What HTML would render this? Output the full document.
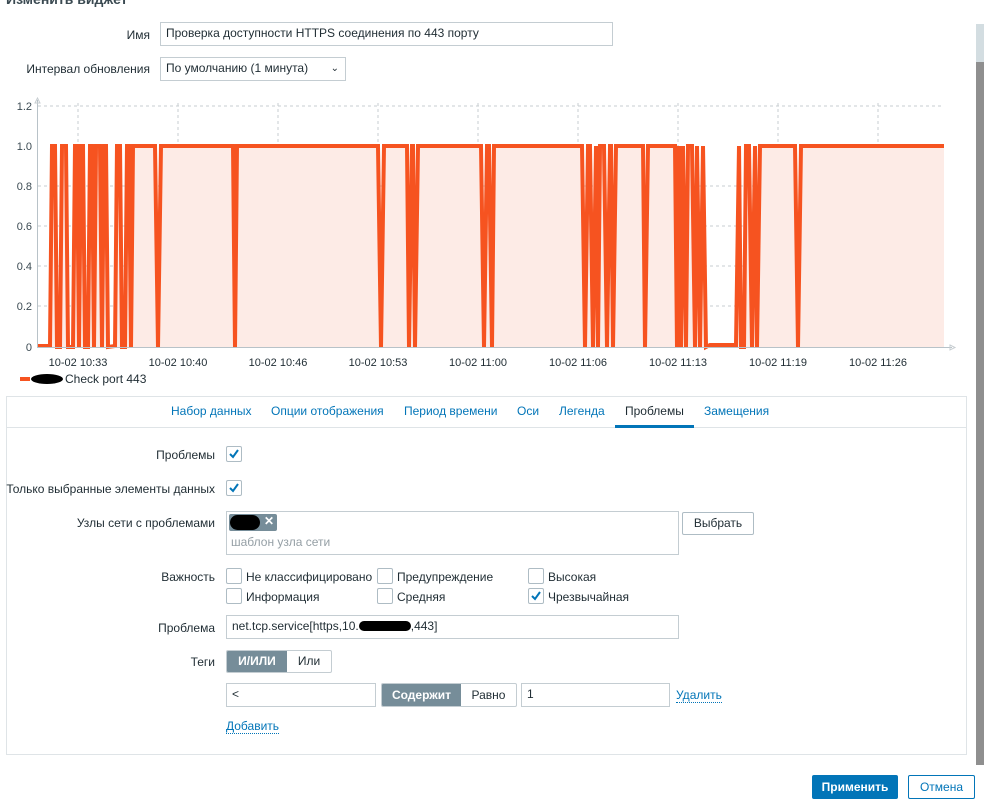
<!DOCTYPE html>
<html><head><meta charset="utf-8"><style>
*{box-sizing:border-box}
body{margin:0;width:984px;height:807px;background:#fff;font-family:"Liberation Sans",Arial,sans-serif;font-size:12px;color:#1f2c33;position:relative;overflow:hidden}
.a{position:absolute}
.lbl{position:absolute;text-align:right;white-space:nowrap}
.inp{position:absolute;border:1px solid #c4cdd2;background:#fff;padding:0 5px;line-height:21px;white-space:nowrap}
.cb{position:absolute;width:16px;height:16px;border:1px solid #aebcc4;border-radius:2px;background:#fff}
.tab{position:absolute;top:404px;color:#0275b8;white-space:nowrap}
.link{color:#0275b8;border-bottom:1px dotted #0275b8}
</style></head><body>
<div class="a" style="left:6px;top:-9px;font-size:14px;font-weight:bold;color:#3b4a52">Изменить виджет</div>

<div class="lbl" style="right:834px;top:28px">Имя</div>
<div class="inp" style="left:160px;top:22px;width:453px;height:24px">Проверка доступности HTTPS соединения по 443 порту</div>
<div class="lbl" style="right:834px;top:62px">Интервал обновления</div>
<div class="inp" style="left:160px;top:57px;width:186px;height:24px">По умолчанию (1 минута)<span style="position:absolute;right:6px;top:0;font-size:10px">&#8964;</span></div>

<svg class="a" style="left:0;top:95px" width="970" height="300" viewBox="0 95 970 300">
<g stroke="#c7cdd1" stroke-dasharray="3,3" stroke-width="1">
<line x1="38" y1="106" x2="944" y2="106"/><line x1="38" y1="186" x2="944" y2="186"/><line x1="38" y1="226" x2="944" y2="226"/><line x1="38" y1="266" x2="944" y2="266"/><line x1="38" y1="306" x2="944" y2="306"/>
<line x1="78" y1="103" x2="78" y2="347"/><line x1="178" y1="103" x2="178" y2="347"/><line x1="278" y1="103" x2="278" y2="347"/><line x1="378" y1="103" x2="378" y2="347"/><line x1="478" y1="103" x2="478" y2="347"/><line x1="578" y1="103" x2="578" y2="347"/><line x1="678" y1="103" x2="678" y2="347"/><line x1="778" y1="103" x2="778" y2="347"/><line x1="878" y1="103" x2="878" y2="347"/>
</g>
<polygon fill="#fdebe6" points="38,347 50,347 52,146 55,146 57,347 60,347 62,146 66,146 68,347 73,347 75,146 77,146 79,347 81,146 83,146 85,347 88,347 90,146 92,146 94,347 96,146 100,146 102,347 104,146 106,146 108,347 115,347 117,146 120,146 122,347 125,347 127,146 129,146 131,347 133,146 155,146 158,347 161,146 233,146 235,347 237,146 378,146 381,347 384,146 407,146 409,347 412,146 413,146 415,347 418,146 481,146 484,347 487,146 489,146 492,347 494,146 582,146 585,347 588,146 590,146 593,347 596,146 598,347 600,146 604,146 607,347 610,146 611,146 613,347 616,146 643,146 645,347 648,146 675,146 677,347 679,146 681,347 683,146 686,347 688,146 692,146 695,347 697,146 700,347 703,146 706,347 710,345 736,345 739,146 741,347 744,347 746,146 749,146 752,347 755,146 757,347 760,146 795,146 798,347 801,146 944,146 944,347"/>
<polyline fill="none" stroke="#f65320" stroke-width="4" stroke-linejoin="miter" points="38,346 50,346 52,146 55,146 57,347 60,347 62,146 66,146 68,347 73,347 75,146 77,146 79,347 81,146 83,146 85,347 88,347 90,146 92,146 94,347 96,146 100,146 102,347 104,146 106,146 108,347 115,346 117,146 120,146 122,347 125,347 127,146 129,146 131,347 133,146 155,146 158,347 161,146 233,146 235,347 237,146 378,146 381,347 384,146 407,146 409,347 412,146 413,146 415,347 418,146 481,146 484,347 487,146 489,146 492,347 494,146 582,146 585,347 588,146 590,146 593,347 596,146 598,347 600,146 604,146 607,347 610,146 611,146 613,347 616,146 643,146 645,347 648,146 675,146 677,347 679,146 681,347 683,146 686,347 688,146 692,146 695,347 697,146 700,347 703,146 706,347 710,345 736,345 739,146 741,347 744,347 746,146 749,146 752,347 755,146 757,347 760,146 795,146 798,347 801,146 944,146"/>
<line x1="37.5" y1="100" x2="37.5" y2="348" stroke="#b8c2c8"/>
<line x1="37" y1="347.5" x2="952" y2="347.5" stroke="#b8c2c8"/>
<path d="M35,103 L37.5,98 L40,103Z M950,345 L955,347.5 L950,350Z" fill="none" stroke="#c7cdd1"/>
<g font-family="Liberation Sans,sans-serif" font-size="11" fill="#3b4a52" text-anchor="end">
<text x="32" y="110">1.2</text><text x="32" y="150">1.0</text><text x="32" y="190">0.8</text><text x="32" y="230">0.6</text><text x="32" y="270">0.4</text><text x="32" y="310">0.2</text><text x="32" y="351">0</text>
</g>
<g font-family="Liberation Sans,sans-serif" font-size="11" fill="#1f2c33" text-anchor="middle">
<text x="78" y="366">10-02 10:33</text><text x="178" y="366">10-02 10:40</text><text x="278" y="366">10-02 10:46</text><text x="378" y="366">10-02 10:53</text><text x="478" y="366">10-02 11:00</text><text x="578" y="366">10-02 11:06</text><text x="678" y="366">10-02 11:13</text><text x="778" y="366">10-02 11:19</text><text x="878" y="366">10-02 11:26</text>
</g>
<rect x="20" y="377" width="10" height="4" fill="#f65320"/>
<ellipse cx="47" cy="379" rx="16" ry="5" fill="#000"/>
<text x="65" y="383" font-family="Liberation Sans,sans-serif" font-size="12" fill="#1f2c33">Check port 443</text>
</svg>

<div class="a" style="left:6px;top:396px;width:961px;height:359px;border:1px solid #dfe4e7"></div>
<div class="a" style="left:7px;top:427px;width:959px;height:1px;background:#dfe4e7"></div>
<div class="tab" style="left:171px">Набор данных</div>
<div class="tab" style="left:271px">Опции отображения</div>
<div class="tab" style="left:404px">Период времени</div>
<div class="tab" style="left:517px">Оси</div>
<div class="tab" style="left:559px">Легенда</div>
<div class="tab" style="left:625px;color:#1f2c33">Проблемы</div>
<div class="a" style="left:615px;top:425px;width:79px;height:3px;background:#0275b8"></div>
<div class="tab" style="left:704px">Замещения</div>

<div class="lbl" style="right:769px;top:448px">Проблемы</div>
<div class="cb" style="left:226px;top:446px"><svg width="14" height="14" class="a" style="left:0;top:0"><path d="M3,7 L6,10 L11,3" fill="none" stroke="#0275b8" stroke-width="2"/></svg></div>
<div class="lbl" style="right:769px;top:482px">Только выбранные элементы данных</div>
<div class="cb" style="left:226px;top:480px"><svg width="14" height="14" class="a" style="left:0;top:0"><path d="M3,7 L6,10 L11,3" fill="none" stroke="#0275b8" stroke-width="2"/></svg></div>

<div class="lbl" style="right:769px;top:516px">Узлы сети с проблемами</div>
<div class="a" style="left:226px;top:511px;width:453px;height:44px;border:1px solid #c4cdd2"></div>
<div class="a" style="left:229px;top:514px;width:48px;height:17px;background:#768d99;border-radius:2px"></div>
<div class="a" style="left:230px;top:515px;width:30px;height:15px;background:#000;border-radius:8px"></div>
<div class="a" style="left:264px;top:514px;color:#fff;font-weight:bold;font-size:12px">✕</div>
<div class="a" style="left:231px;top:535px;color:#959fa5">шаблон узла сети</div>
<div class="a" style="left:682px;top:512px;width:72px;height:23px;border:1px solid #aebcc4;border-radius:2px;text-align:center;line-height:21px">Выбрать</div>

<div class="lbl" style="right:769px;top:570px">Важность</div>
<div class="cb" style="left:226px;top:568px"></div><div class="a" style="left:246px;top:570px">Не классифицировано</div>
<div class="cb" style="left:377px;top:568px"></div><div class="a" style="left:397px;top:570px">Предупреждение</div>
<div class="cb" style="left:528px;top:568px"></div><div class="a" style="left:548px;top:570px">Высокая</div>
<div class="cb" style="left:226px;top:588px"></div><div class="a" style="left:246px;top:590px">Информация</div>
<div class="cb" style="left:377px;top:588px"></div><div class="a" style="left:397px;top:590px">Средняя</div>
<div class="cb" style="left:528px;top:588px"><svg width="14" height="14" class="a" style="left:0;top:0"><path d="M3,7 L6,10 L11,3" fill="none" stroke="#0275b8" stroke-width="2"/></svg></div><div class="a" style="left:548px;top:590px">Чрезвычайная</div>

<div class="lbl" style="right:769px;top:621px">Проблема</div>
<div class="inp" style="left:226px;top:615px;width:453px;height:24px">net.tcp.service[https,10.<span style="display:inline-block;width:52px;height:10px;background:#000;border-radius:5px;vertical-align:-1px"></span>,443]</div>

<div class="lbl" style="right:769px;top:655px">Теги</div>
<div class="a" style="left:226px;top:650px;width:106px;height:23px;border:1px solid #c4cdd2;border-radius:2px;overflow:hidden">
<div class="a" style="left:0;top:0;width:60px;height:21px;background:#768d99;color:#fff;font-weight:bold;text-align:center;line-height:21px">И/ИЛИ</div>
<div class="a" style="left:60px;top:0;width:44px;height:21px;text-align:center;line-height:21px">Или</div></div>

<div class="inp" style="left:226px;top:683px;width:150px;height:24px">&lt;</div>
<div class="a" style="left:381px;top:683px;width:136px;height:24px;border:1px solid #c4cdd2;border-radius:2px;overflow:hidden">
<div class="a" style="left:0;top:0;width:79px;height:22px;background:#768d99;color:#fff;font-weight:bold;text-align:center;line-height:22px">Содержит</div>
<div class="a" style="left:79px;top:0;width:55px;height:22px;text-align:center;line-height:22px">Равно</div></div>
<div class="inp" style="left:521px;top:683px;width:149px;height:24px">1</div>
<div class="a" style="left:676px;top:688px"><span class="link">Удалить</span></div>
<div class="a" style="left:226px;top:719px"><span class="link">Добавить</span></div>

<div class="a" style="left:812px;top:775px;width:86px;height:24px;background:#0275b8;border-radius:2px;color:#fff;font-weight:bold;text-align:center;line-height:24px">Применить</div>
<div class="a" style="left:908px;top:775px;width:67px;height:24px;border:1px solid #0275b8;border-radius:2px;color:#0275b8;text-align:center;line-height:22px">Отмена</div>

<div class="a" style="left:976px;top:24px;width:8px;height:38px;background:#d3dde1"></div>
<div class="a" style="left:976px;top:62px;width:8px;height:703px;background:#8f8f8f"></div>
</body></html>
